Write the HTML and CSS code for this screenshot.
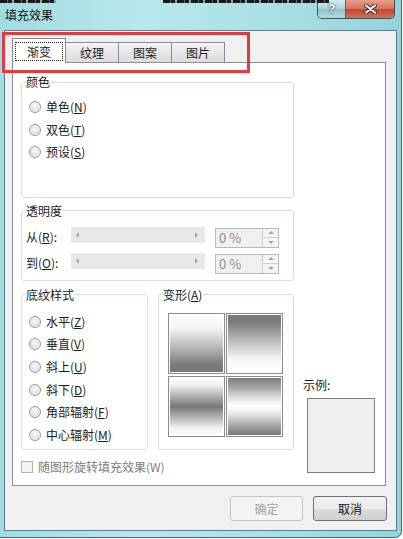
FILE: index.html
```html
<!DOCTYPE html>
<html lang="zh-CN">
<head>
    <meta charset="UTF-8">
    <title>填充效果</title>
    <link rel="stylesheet" href="styles.css">
</head>
<body>
    <div class="window">
        <!-- 玻璃边框透出的背景文字 -->
        <div class="glass-bleed"><span class="b1"></span><span class="b2"></span></div>

        <div class="titlebar">
            <span class="title">填充效果</span>
            <div class="caption-btns">
                <span class="cap-help">?</span>
                <span class="cap-close">
                    <svg width="13" height="10" viewBox="0 0 13 10">
                        <path d="M2 1.5 L11 8.5 M11 1.5 L2 8.5" stroke="#3b2a26" stroke-width="4" stroke-linecap="round"/>
                        <path d="M2 1.5 L11 8.5 M11 1.5 L2 8.5" stroke="#fff" stroke-width="2.2" stroke-linecap="round"/>
                    </svg>
                </span>
            </div>
        </div>

        <div class="client">
            <div class="tabs">
                <div class="tab active"><span class="focus">渐变</span></div>
                <div class="tab">纹理</div>
                <div class="tab">图案</div>
                <div class="tab">图片</div>
            </div>

            <div class="panel">
                <div class="col-main">
                    <fieldset class="grp grp-color">
                        <legend>颜色</legend>
                        <label class="radio"><i></i>单色(<u>N</u>)</label>
                        <label class="radio"><i></i>双色(<u>T</u>)</label>
                        <label class="radio"><i></i>预设(<u>S</u>)</label>
                    </fieldset>

                    <fieldset class="grp grp-alpha">
                        <legend>透明度</legend>
                        <div class="alpha-row">
                            <span class="alpha-label">从(<u>R</u>):</span>
                            <div class="track"><i class="arr-l"></i><i class="arr-r"></i></div>
                            <div class="spin"><span class="spin-val">0 %</span><span class="spin-btns"><b class="up"></b><b class="down"></b></span></div>
                        </div>
                        <div class="alpha-row">
                            <span class="alpha-label">到(<u>O</u>):</span>
                            <div class="track"><i class="arr-l"></i><i class="arr-r"></i></div>
                            <div class="spin"><span class="spin-val">0 %</span><span class="spin-btns"><b class="up"></b><b class="down"></b></span></div>
                        </div>
                    </fieldset>

                    <div class="grp-row">
                        <fieldset class="grp grp-shade">
                            <legend>底纹样式</legend>
                            <label class="radio"><i></i>水平(<u>Z</u>)</label>
                            <label class="radio"><i></i>垂直(<u>V</u>)</label>
                            <label class="radio"><i></i>斜上(<u>U</u>)</label>
                            <label class="radio"><i></i>斜下(<u>D</u>)</label>
                            <label class="radio"><i></i>角部辐射(<u>F</u>)</label>
                            <label class="radio"><i></i>中心辐射(<u>M</u>)</label>
                        </fieldset>
                        <fieldset class="grp grp-variant">
                            <legend>变形(<u>A</u>)</legend>
                            <div class="tiles">
                                <div class="tile t1"></div>
                                <div class="tile t2"></div>
                                <div class="tile t3"></div>
                                <div class="tile t4"></div>
                            </div>
                        </fieldset>
                    </div>

                    <label class="check"><i></i>随图形旋转填充效果(W)</label>
                </div>

                <div class="col-sample">
                    <span>示例:</span>
                    <div class="sample-box"></div>
                </div>
            </div>

            <div class="actions">
                <button class="btn disabled">确定</button>
                <button class="btn">取消</button>
            </div>
        </div>

        <!-- 标注框 -->
        <div class="mark"></div>
    </div>
</body>
</html>
```

FILE: styles.css
```css
* {
    margin: 0;
    padding: 0;
    box-sizing: border-box;
}

body {
    background-color: #fff;
    color: #1b1b1b;
    font-family: "Noto Sans CJK SC", sans-serif;
    font-size: 12px;
    line-height: 16px;
}

u {
    text-decoration: underline;
    text-underline-offset: 1px;
}

/* 窗口外框 */
.window {
    position: relative;
    width: 402px;
    height: 538px;
    padding: 0 4px 6px 4px;
    background: linear-gradient(90deg, #a2dbe2, #b9e8ed 35%, #a8dfe5 70%, #94d3db);
    border-right: 1px solid #3f6a72;
    border-bottom: 1px solid #3f6a72;
    border-bottom-right-radius: 7px;
}

.glass-bleed span {
    position: absolute;
    top: 0;
    height: 3px;
    background: repeating-linear-gradient(90deg, #1a1a1a 0 7px, #55676b 7px 8px, #1a1a1a 8px 12px, #8aa4a8 12px 14px);
}

.glass-bleed .b1 {
    left: 0;
    width: 56px;
}

.glass-bleed .b2 {
    left: 163px;
    width: 166px;
}

.titlebar {
    display: flex;
    justify-content: space-between;
    height: 30px;
}

.title {
    padding-left: 1px;
    line-height: 30px;
    font-size: 12px;
    color: #111;
}

.caption-btns {
    display: flex;
    height: 19px;
    margin-right: 2px;
    border: 1px solid #3d5358;
    border-top: none;
    border-radius: 0 0 5px 5px;
    overflow: hidden;
}

.cap-help {
    width: 28px;
    border-right: 1px solid #4f6569;
    background: linear-gradient(#d4eff2, #a9d6db 50%, #8cc3c9 50%, #acdfe4);
    text-align: center;
    font-family: "Liberation Sans", sans-serif;
    font-weight: bold;
    font-size: 13px;
    line-height: 18px;
    color: #fff;
    text-shadow: 0 0 2px #2c4549, 0 0 1px #2c4549;
}

.cap-close {
    display: flex;
    align-items: center;
    justify-content: center;
    width: 48px;
    background: linear-gradient(#e6a08c, #d4725a 50%, #c2432b 50%, #cf7259);
}

/* 客户区 */
.client {
    height: 501px;
    padding: 7px 9px 0 7px;
    background-color: #f0f0f0;
    border: 1px solid #5b7f87;
}

.tabs {
    display: flex;
    align-items: flex-end;
    height: 24px;
}

.tab {
    width: 54px;
    height: 20px;
    margin-left: -1px;
    border: 1px solid #898c95;
    border-bottom: none;
    background: linear-gradient(#f5f5f5, #e6e6e6 50%, #dddddd);
    text-align: center;
    line-height: 19px;
}

.tab.active {
    position: relative;
    z-index: 1;
    height: 25px;
    margin-left: 0;
    margin-bottom: -1px;
    padding-top: 3px;
    background: #fff;
}

.tab.active + .tab {
    margin-left: -1px;
}

.focus {
    display: block;
    height: 19px;
    margin: 0 2px;
    border: 1px dotted #222;
    line-height: 17px;
}

.panel {
    display: flex;
    height: 424px;
    margin-right: 1px;
    padding: 11px 0 9px 8px;
    background-color: #fff;
    border: 1px solid #898c95;
}

.col-main {
    width: 273px;
}

/* 分组框 */
.grp {
    min-width: 0;
    margin: 0;
    padding: 0 0 0 4px;
    border: 1px solid #d5dfe5;
    border-radius: 3px;
}

.grp legend {
    padding: 0;
    line-height: 16px;
}

.grp-color {
    width: 273px;
    padding-top: 6px;
    padding-bottom: 33px;
}

.radio {
    display: flex;
    align-items: center;
    height: 22.5px;
    margin-left: 3px;
}

.radio i {
    width: 12px;
    height: 12px;
    margin-right: 5px;
    border: 1px solid #9a9a9a;
    border-radius: 50%;
    background: radial-gradient(circle at 50% 40%, #fbfbfb, #e2e2e2 55%, #cfcfcf);
    box-shadow: inset 0 0 0 1px #f4f4f4;
}

.grp-alpha {
    width: 273px;
    margin-top: 5px;
    padding-top: 8px;
    padding-bottom: 6px;
}

.alpha-row {
    display: flex;
    align-items: flex-start;
    height: 21px;
}

.alpha-row + .alpha-row {
    margin-top: 5px;
}

.alpha-label {
    width: 45px;
    line-height: 20px;
}

.track {
    display: flex;
    justify-content: space-between;
    align-items: center;
    width: 134px;
    height: 16px;
    margin-right: 10px;
    padding: 0 7px 0 5px;
    background-color: #e9e9e9;
}

.arr-l {
    border-right: 3px solid #a6a6a6;
    border-top: 3px solid transparent;
    border-bottom: 3px solid transparent;
}

.arr-r {
    border-left: 3px solid #a6a6a6;
    border-top: 3px solid transparent;
    border-bottom: 3px solid transparent;
}

.spin {
    display: flex;
    width: 64px;
    height: 20px;
    margin-top: 1px;
    background-color: #f0f0f0;
    border: 1px solid #b9b9b9;
}

.spin-val {
    flex: 1;
    padding-left: 3px;
    color: #8d8d8d;
    font-size: 13px;
    line-height: 18px;
}

.spin-btns {
    display: flex;
    flex-direction: column;
    width: 16px;
    border-left: 1px solid #d0d0d0;
}

.spin-btns b {
    display: flex;
    flex: 1;
    align-items: center;
    justify-content: center;
    background-color: #f4f4f4;
}

.spin-btns .up {
    border-bottom: 1px solid #d0d0d0;
}

.spin-btns .up::before {
    content: "";
    border-bottom: 3px solid #a6a6a6;
    border-left: 3px solid transparent;
    border-right: 3px solid transparent;
}

.spin-btns .down::before {
    content: "";
    border-top: 3px solid #a6a6a6;
    border-left: 3px solid transparent;
    border-right: 3px solid transparent;
}

.grp-row {
    display: flex;
    gap: 10px;
    margin-top: 6px;
}

.grp-shade {
    width: 127px;
    padding-top: 8px;
    padding-bottom: 3px;
}

.grp-shade .radio {
    height: 22.6px;
}

.grp-variant {
    width: 136px;
}

.tiles {
    display: grid;
    grid-template-columns: 57px 57px;
    grid-template-rows: 61px 61px;
    gap: 2px 1px;
    margin: 10px 0 0 5px;
}

.tile {
    border: 1px solid #8a8a8a;
    box-shadow: inset 0 0 0 1px #fff;
}

.t1 {
    background: linear-gradient(#fff, #f3f3f3 25%, #b5b5b5 58%, #7c7c7c 85%, #777);
}

.t2 {
    background: linear-gradient(#777, #7c7c7c 15%, #b5b5b5 42%, #f3f3f3 75%, #fff);
}

.t3 {
    background: linear-gradient(#fff, #f0f0f0 14%, #a5a5a5 36%, #777 50%, #a5a5a5 64%, #f0f0f0 86%, #fff);
}

.t4 {
    background: linear-gradient(#777, #a0a0a0 16%, #e8e8e8 38%, #fff 50%, #e8e8e8 62%, #a0a0a0 84%, #777);
}

.check {
    display: flex;
    align-items: center;
    height: 18px;
    margin-top: 8px;
    color: #7c7c7c;
}

.check i {
    width: 12px;
    height: 12px;
    margin-right: 5px;
    border: 1px solid #b4b4b4;
    background-color: #f4f4f4;
}

.col-sample {
    display: flex;
    flex-direction: column;
    margin-left: 9px;
    padding-top: 303px;
}

.sample-box {
    width: 68px;
    height: 75px;
    margin: 5px 0 0 4px;
    background-color: #efefef;
    border: 1px solid #7b7b7b;
}

/* 底部按钮 */
.actions {
    display: flex;
    justify-content: flex-end;
    gap: 10px;
    margin-top: 10px;
}

.btn {
    width: 74px;
    height: 25px;
    border: 1px solid #707070;
    border-radius: 3px;
    background: linear-gradient(#f2f2f2, #ebebeb 50%, #dddddd 50%, #cfcfcf);
    font-family: "Noto Sans CJK SC", sans-serif;
    font-size: 12px;
    color: #111;
}

.btn.disabled {
    width: 73px;
    border-color: #c4c4c4;
    background: #f4f4f4;
    color: #a3a3a3;
}

/* 红色标注框 */
.mark {
    position: absolute;
    left: 2px;
    top: 32px;
    width: 248px;
    height: 41px;
    border: 3px solid #e3393f;
}
```
